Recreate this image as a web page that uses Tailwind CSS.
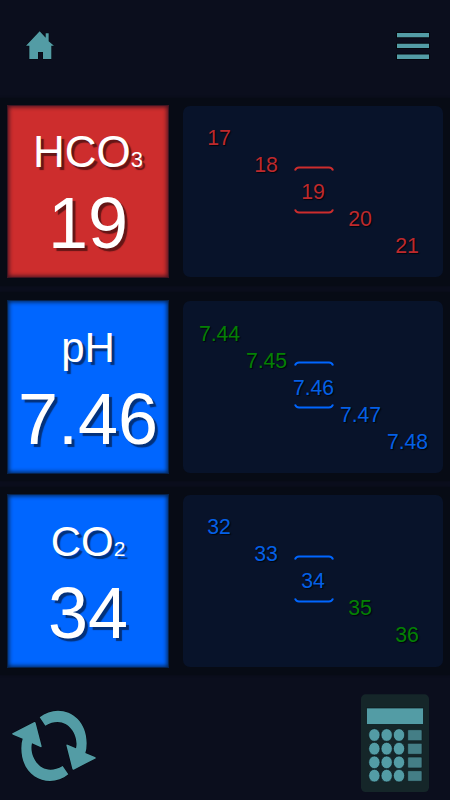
<!DOCTYPE html>
<html lang="en">
<head>
<meta charset="utf-8">
<meta name="viewport" content="width=device-width, initial-scale=1">
<title>Acid-base values</title>
<script src="https://cdn.jsdelivr.net/npm/@tailwindcss/browser@4"></script>
</head>
<body class="w-[450px] h-[800px] overflow-hidden bg-[#0b0e1d] font-['Liberation_Sans',Arial,sans-serif] flex flex-col">
<header class="h-[98px] shrink-0 flex items-start justify-between">
  <svg class="w-[50px] h-[50px] ml-[15px] mt-5" viewBox="0 0 150 150"><path d="M74 34L92 53V40H101V64L117 77H109V117H84V96H69V117H43V77H33Z" fill="#539ca5" stroke="#04070d" stroke-width="3" paint-order="stroke"/></svg>
  <svg class="w-[36px] h-[30px] mt-[31px] mr-[19px]" viewBox="0 0 36 30"><path d="M2 2H34V6.3H2ZM2 12.8H34V17H2ZM2 23.5H34V28H2Z" fill="#539ca5" stroke="#04070d" stroke-width="2" paint-order="stroke"/></svg>
</header>
<main class="flex flex-col gap-[6px] shrink-0">
  <section class="h-[188px] pt-2 pl-2 flex items-start gap-[15px] bg-[#070b15] shadow-[0_0_2px_0px_#070b15]">
    <div class="w-[160px] h-[171px] bg-[#cd2d2d] shadow-[0_0_0_1px_#431421,inset_0_0_4px_1px_#431421] text-white text-center">
      <div class="pt-[22px] text-[44px] leading-[48px] [text-shadow:3px_3px_1px_#641616]">HCO<span class="text-[22px] leading-none">3</span></div>
      <div class="pt-[7px] text-[72px] leading-[80px] [text-shadow:3px_3px_1px_#641616]">19</div>
    </div>
    <div class="w-[260px] h-[171px] rounded-[7px] bg-[#08132a] flex items-center justify-center">
      <div class="pt-px grid grid-cols-[repeat(5,47px)] grid-rows-[repeat(5,27px)] text-[21.3px] leading-[27px] text-center text-[#bd292d] [text-shadow:1px_1px_1px_#02050c]">
        <span class="col-start-1 row-start-1">17</span><span class="col-start-2 row-start-2">18</span>
        <span class="col-start-3 row-start-3 relative">19<svg class="absolute left-[4px] -top-[12.5px] w-10 h-[50px]" viewBox="0 0 40 50" fill="none" stroke="#cd2d2d" stroke-width="2"><path d="M1 4.5Q2 1.5 5 1.5H35Q38 1.5 39 4.5M1 43.5Q2 46.5 5 46.5H35Q38 46.5 39 43.5"/></svg></span>
        <span class="col-start-4 row-start-4">20</span><span class="col-start-5 row-start-5">21</span>
      </div>
    </div>
  </section>
  <section class="h-[188.5px] pt-[9px] pl-2 flex items-start gap-[15px] bg-[#070b15] shadow-[0_0_2px_0px_#070b15]">
    <div class="w-[160px] h-[172px] bg-[#0066ff] shadow-[0_0_0_1px_#05234f,inset_0_0_4px_1px_#05234f] text-white text-center">
      <div class="pt-[23px] text-[42px] leading-[48px] [text-shadow:3px_3px_1px_#03317a]">pH</div>
      <div class="pt-[7px] text-[72px] leading-[80px] [text-shadow:3px_3px_1px_#03317a]">7.46</div>
    </div>
    <div class="w-[260px] h-[172px] rounded-[7px] bg-[#08132a] flex items-center justify-center">
      <div class="pt-px pl-px grid grid-cols-[repeat(5,47px)] grid-rows-[repeat(5,27px)] text-[21.2px] leading-[27px] text-center text-[#0460e6] [text-shadow:1px_1px_1px_#02050c]">
        <span class="col-start-1 row-start-1 text-[#048004]">7.44</span><span class="col-start-2 row-start-2 text-[#048004]">7.45</span>
        <span class="col-start-3 row-start-3 relative">7.46<svg class="absolute left-[3.5px] -top-[13px] w-10 h-[50px]" viewBox="0 0 40 50" fill="none" stroke="#0066ff" stroke-width="2"><path d="M1 4.5Q2 1.5 5 1.5H35Q38 1.5 39 4.5M1 43.5Q2 46.5 5 46.5H35Q38 46.5 39 43.5"/></svg></span>
        <span class="col-start-4 row-start-4">7.47</span><span class="col-start-5 row-start-5">7.48</span>
      </div>
    </div>
  </section>
  <section class="h-[188.5px] pt-[8.5px] pl-2 flex items-start gap-[15px] bg-[#070b15] shadow-[0_0_2px_0px_#070b15]">
    <div class="w-[160px] h-[172px] bg-[#0066ff] shadow-[0_0_0_1px_#05234f,inset_0_0_4px_1px_#05234f] text-white text-center">
      <div class="pt-[23px] text-[42px] leading-[48px] [text-shadow:3px_3px_1px_#03317a]">CO<span class="text-[21px] leading-none">2</span></div>
      <div class="pt-[7px] text-[72px] leading-[80px] [text-shadow:3px_3px_1px_#03317a]">34</div>
    </div>
    <div class="w-[260px] h-[172px] rounded-[7px] bg-[#08132a] flex items-center justify-center">
      <div class="pt-px grid grid-cols-[repeat(5,47px)] grid-rows-[repeat(5,27px)] text-[21.3px] leading-[27px] text-center text-[#0460e6] [text-shadow:1px_1px_1px_#02050c]">
        <span class="col-start-1 row-start-1">32</span><span class="col-start-2 row-start-2">33</span>
        <span class="col-start-3 row-start-3 relative">34<svg class="absolute left-[4px] -top-[13px] w-10 h-[50px]" viewBox="0 0 40 50" fill="none" stroke="#0066ff" stroke-width="2"><path d="M1 4.5Q2 1.5 5 1.5H35Q38 1.5 39 4.5M1 43.5Q2 46.5 5 46.5H35Q38 46.5 39 43.5"/></svg></span>
        <span class="col-start-4 row-start-4 text-[#048004]">35</span><span class="col-start-5 row-start-5 text-[#048004]">36</span>
      </div>
    </div>
  </section>
</main>
<footer class="grow flex justify-between items-end">
  <svg class="w-[110px] h-[110px]" viewBox="0 0 330 330" fill="#539ca5" stroke="#05080f" stroke-width="3" paint-order="stroke">
    <path d="M119 82C172 38 260 68 260 160Q260 178 256 189L285 201Q290 204 285 206L221 239Q218 240 217 236L199 166Q199 162 203 164L228 175C238 135 200 70 136 107Z"/>
    <path d="M119 82C172 38 260 68 260 160Q260 178 256 189L285 201Q290 204 285 206L221 239Q218 240 217 236L199 166Q199 162 203 164L228 175C238 135 200 70 136 107Z" transform="rotate(180 162 167.5)"/>
  </svg>
  <svg class="w-[105px] h-[115px]" viewBox="0 0 315 345">
    <rect x="48" y="28" width="204" height="293" rx="14" fill="#152629"/>
    <g fill="#539ca5" stroke="#091519" stroke-width="2">
      <rect x="65" y="69" width="170" height="49"/>
      <ellipse cx="88" cy="150" rx="17" ry="19"/><ellipse cx="125" cy="150" rx="17" ry="19"/><ellipse cx="162" cy="150" rx="17" ry="19"/>
      <ellipse cx="88" cy="191" rx="17" ry="19"/><ellipse cx="125" cy="191" rx="17" ry="19"/><ellipse cx="162" cy="191" rx="17" ry="19"/>
      <ellipse cx="88" cy="232" rx="17" ry="19"/><ellipse cx="125" cy="232" rx="17" ry="19"/><ellipse cx="162" cy="232" rx="17" ry="19"/>
      <ellipse cx="88" cy="272" rx="17" ry="19"/><ellipse cx="125" cy="272" rx="17" ry="19"/><ellipse cx="162" cy="272" rx="17" ry="19"/>
    </g>
    <g fill="#447e86" stroke="#0d1c20" stroke-width="2">
      <rect x="188" y="134" width="43" height="33" rx="3"/><rect x="188" y="175" width="43" height="33" rx="3"/><rect x="188" y="216" width="43" height="33" rx="3"/><rect x="188" y="257" width="43" height="32" rx="3"/>
    </g>
  </svg>
</footer>
</body>
</html>
